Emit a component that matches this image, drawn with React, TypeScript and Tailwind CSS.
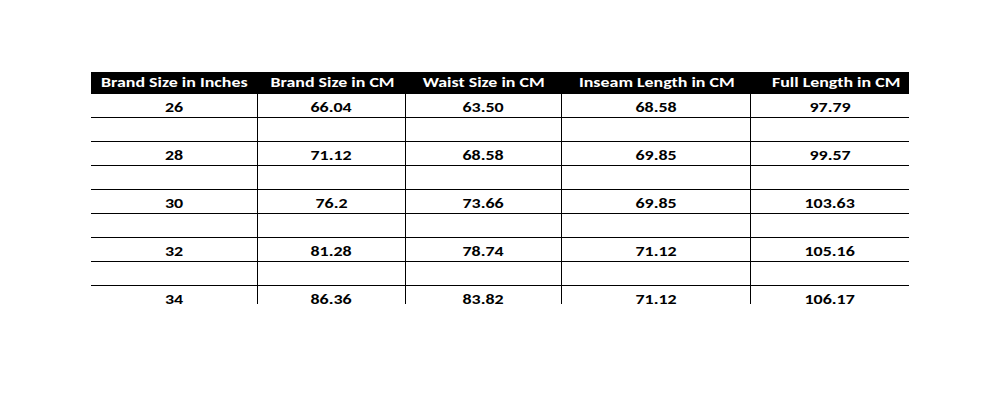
import React from "react";

const headers = [
  "Brand Size in Inches",
  "Brand Size in CM",
  "Waist Size in CM",
  "Inseam Length in CM",
  "Full Length in CM",
];

const rows: (string[] | null)[] = [
  ["26", "66.04", "63.50", "68.58", "97.79"],
  null,
  ["28", "71.12", "68.58", "69.85", "99.57"],
  null,
  ["30", "76.2", "73.66", "69.85", "103.63"],
  null,
  ["32", "81.28", "78.74", "71.12", "105.16"],
  null,
  ["34", "86.36", "83.82", "71.12", "106.17"],
];

export default function App() {
  return (
    <div
      className="w-[1000px] h-[400px] bg-white pt-[72px] pl-[91px]"
      style={{ fontFamily: "Carlito, Lato, 'Open Sans', sans-serif" }}
    >
      <div className="w-[818px] h-[232px] overflow-hidden">
        <div className="grid grid-cols-[167px_148px_156px_189px_158px] bg-black text-white font-bold text-[14px] h-[22px] leading-[21px]">
          {headers.map((h, i) => (
            <div
              key={h}
              className={"text-center whitespace-nowrap " + (i === 4 ? "pl-[12px]" : "")}
            >
              <span className="inline-block scale-x-[1.28]">{h}</span>
            </div>
          ))}
        </div>
        {rows.map((r, i) => (
          <div
            key={i}
            className="grid grid-cols-[167px_148px_156px_189px_158px] h-[24px] border-b border-black text-black font-bold text-[14px] leading-[23px]"
          >
            {[0, 1, 2, 3, 4].map((c) => (
              <div
                key={c}
                className={
                  "text-center whitespace-nowrap pt-[2px] " +
                  (c < 4 ? "border-r border-black" : "")
                }
              >
                {r ? <span className="inline-block scale-x-[1.28]">{r[c]}</span> : ""}
              </div>
            ))}
          </div>
        ))}
      </div>
    </div>
  );
}
